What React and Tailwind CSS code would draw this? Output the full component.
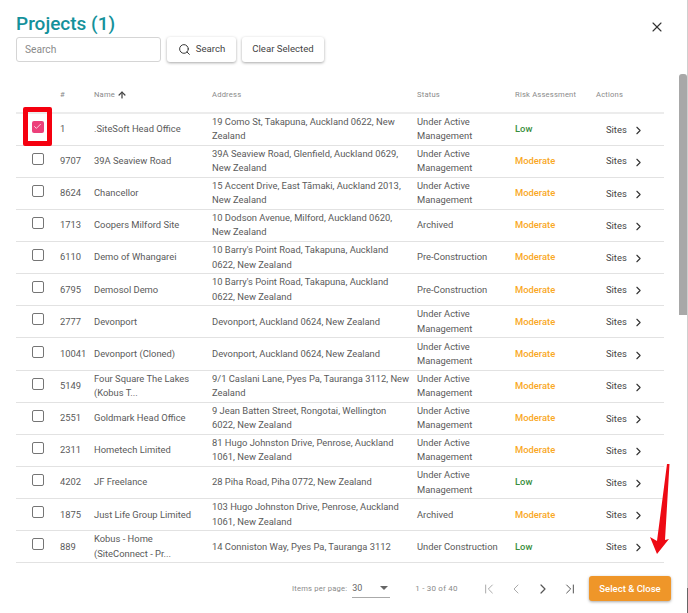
import React from "react";
import { Search, X, ChevronRight, ChevronLeft, ChevronFirst, ChevronLast, ArrowUp, Check } from "lucide-react";

const UAM = "Under Active Management";

const rows = [
  ["1", ".SiteSoft Head Office", "19 Como St, Takapuna, Auckland 0622, New Zealand", UAM, "Low"],
  ["9707", "39A Seaview Road", "39A Seaview Road, Glenfield, Auckland 0629, New Zealand", UAM, "Moderate"],
  ["8624", "Chancellor", "15 Accent Drive, East Tāmaki, Auckland 2013, New Zealand", UAM, "Moderate"],
  ["1713", "Coopers Milford Site", "10 Dodson Avenue, Milford, Auckland 0620, New Zealand", "Archived", "Moderate"],
  ["6110", "Demo of Whangarei", "10 Barry's Point Road, Takapuna, Auckland 0622, New Zealand", "Pre-Construction", "Moderate"],
  ["6795", "Demosol Demo", "10 Barry's Point Road, Takapuna, Auckland 0622, New Zealand", "Pre-Construction", "Moderate"],
  ["2777", "Devonport", "Devonport, Auckland 0624, New Zealand", UAM, "Moderate"],
  ["10041", "Devonport (Cloned)", "Devonport, Auckland 0624, New Zealand", UAM, "Moderate"],
  ["5149", "Four Square The Lakes (Kobus T...", "9/1 Caslani Lane, Pyes Pa, Tauranga 3112, New Zealand", UAM, "Moderate"],
  ["2551", "Goldmark Head Office", "9 Jean Batten Street, Rongotai, Wellington 6022, New Zealand", UAM, "Moderate"],
  ["2311", "Hometech Limited", "81 Hugo Johnston Drive, Penrose, Auckland 1061, New Zealand", UAM, "Moderate"],
  ["4202", "JF Freelance", "28 Piha Road, Piha 0772, New Zealand", UAM, "Low"],
  ["1875", "Just Life Group Limited", "103 Hugo Johnston Drive, Penrose, Auckland 1061, New Zealand", "Archived", "Moderate"],
  ["889", "Kobus - Home (SiteConnect - Pr...", "14 Conniston Way, Pyes Pa, Tauranga 3112", "Under Construction", "Low"],
];

const Row = ({ row, index }) => {
  const [id, name, address, status, risk] = row;
  const selected = index === 0;

  return (
    <tr className="h-[32.15px] border-b border-[#e2e2e2] text-[9.4px] leading-[14.5px] text-[#5a5a5a]">
      <td className="relative p-0">
        <div className="flex justify-center pr-[1px] pb-[5px]">
          {selected ? (
            <div className="relative flex h-[12px] w-[12px] items-center justify-center rounded-[2px] bg-[#ec407a]">
              <Check size={9} strokeWidth={2} className="text-white" />
              {/* red highlight drawn on the screenshot */}
              <div className="absolute top-[-14px] left-[-9px] h-[39px] w-[29px] rounded-[2px] border-[5px] border-[#f5000f]" />
            </div>
          ) : (
            <div className="h-[12px] w-[12px] rounded-[2px] border border-[#757575]" />
          )}
        </div>
      </td>
      <td className="p-0">{id}</td>
      <td className="p-0 pr-[8px]">{name}</td>
      <td className="p-0 pr-[6px]">{address}</td>
      <td className="p-0 pr-[12px]">{status}</td>
      <td className={risk === "Low" ? "p-0 font-medium text-[#388e3c]" : "p-0 font-medium text-[#f9a825]"}>{risk}</td>
      <td className="p-0">
        <div className="flex items-center pt-[1px] pl-[10px] text-[#444]">
          <span>Sites</span>
          <ChevronRight size={13} strokeWidth={2} className="ml-[5px] mt-[1px] text-[#333]" />
        </div>
      </td>
    </tr>
  );
};

export default function App() {
  return (
    <div className="relative flex h-[613px] w-[688px] flex-col overflow-hidden bg-white font-['Roboto',sans-serif]">
      <div className="flex h-[37px] items-end justify-between pr-[23px] pl-[16px]">
        <h1 className="text-[19px] leading-[26px] font-medium text-[#14919b]">Projects (1)</h1>
        <X size={16} strokeWidth={1.7} className="mb-[2px] text-[#333]" />
      </div>

      <div className="flex items-center gap-[6px] pl-[16px]">
        <div className="flex h-[25px] w-[145px] items-center rounded-[3px] border border-[#d5d5d5] px-[8px] text-[10.2px] text-[#8a8a8a]">
          Search
        </div>
        <button className="flex h-[25px] w-[69px] items-center justify-center gap-[5px] rounded-[3px] bg-white text-[9.6px] text-[#444] shadow-[0_1px_3px_rgba(0,0,0,0.35)]">
          <Search size={13} strokeWidth={1.8} className="text-[#333]" />
          Search
        </button>
        <button className="h-[25px] w-[82px] rounded-[3px] bg-white text-[9.6px] text-[#444] shadow-[0_1px_3px_rgba(0,0,0,0.35)]">
          Clear Selected
        </button>
      </div>

      <div className="mt-[18px] pl-[16px]">
        <table className="w-[648px] table-fixed border-collapse">
          <colgroup>
            <col className="w-[44px]" />
            <col className="w-[34px]" />
            <col className="w-[118px]" />
            <col className="w-[205px]" />
            <col className="w-[98px]" />
            <col className="w-[81px]" />
            <col className="w-[68px]" />
          </colgroup>
          <thead>
            <tr className="h-[33px] border-b-2 border-[#ececec] text-left text-[7.6px] tracking-[0.2px] text-[#8a8a8a]">
              <th className="p-0 pb-[2px] font-normal"></th>
              <th className="p-0 pb-[2px] font-normal">#</th>
              <th className="p-0 pb-[2px] font-normal">
                <span className="flex items-center gap-[2px]">
                  Name
                  <ArrowUp size={10} strokeWidth={3} className="text-[#444]" />
                </span>
              </th>
              <th className="p-0 pb-[2px] font-normal">Address</th>
              <th className="p-0 pb-[2px] font-normal">Status</th>
              <th className="p-0 pb-[2px] font-normal">Risk Assessment</th>
              <th className="p-0 pb-[2px] font-normal">Actions</th>
            </tr>
          </thead>
          <tbody>
            {rows.map((row, i) => (
              <Row key={row[0]} row={row} index={i} />
            ))}
          </tbody>
        </table>
      </div>

      <div className="mt-[13px] flex h-[25px] items-center pr-[17px] pl-[292px] text-[#8a8a8a]">
        <span className="text-[7.6px] tracking-[0.2px]">Items per page:</span>
        <div className="ml-[5px] flex h-[18px] w-[38px] items-center justify-between border-b border-[#aaa] pr-[2px] text-[9px] text-[#666]">
          30
          <span className="h-0 w-0 border-x-[4px] border-t-[4px] border-x-transparent border-t-[#666]" />
        </div>
        <span className="ml-[25px] w-[66px] text-[8px] tracking-[0.2px]">1 - 30 of 40</span>
        <div className="flex w-[102px] items-center gap-[11px] text-[#aaa]">
          <ChevronFirst size={16} strokeWidth={1.5} />
          <ChevronLeft size={16} strokeWidth={1.5} />
          <ChevronRight size={16} strokeWidth={1.8} className="text-[#555]" />
          <ChevronLast size={16} strokeWidth={1.5} className="text-[#555]" />
        </div>
        <button className="ml-auto flex h-[25px] w-[82px] items-center justify-center rounded-[3px] bg-[#ef9629] text-[9.5px] font-medium text-white shadow-[0_1px_3px_rgba(0,0,0,0.35)]">
          Select &amp; Close
        </button>
      </div>

      {/* scrollbar */}
      <div className="absolute top-[74px] right-[1px] h-[241px] w-[8px] rounded-t-[3px] bg-[#a8a8a8]" />
      <div className="absolute top-0 right-0 bottom-0 w-[1px] bg-[#cfcfcf]" />
      <div className="absolute right-0 bottom-0 h-[25px] w-[1px] bg-[#666]" />

      {/* red arrow drawn on the screenshot */}
      <svg className="absolute top-[462px] left-[645px]" width="30" height="96" viewBox="0 0 30 96">
        <path d="M22 2 L24.5 2 L20 78 L24 77 L12 92 L5 75 L12 79 Z" fill="#ee0a14" />
      </svg>
    </div>
  );
}
